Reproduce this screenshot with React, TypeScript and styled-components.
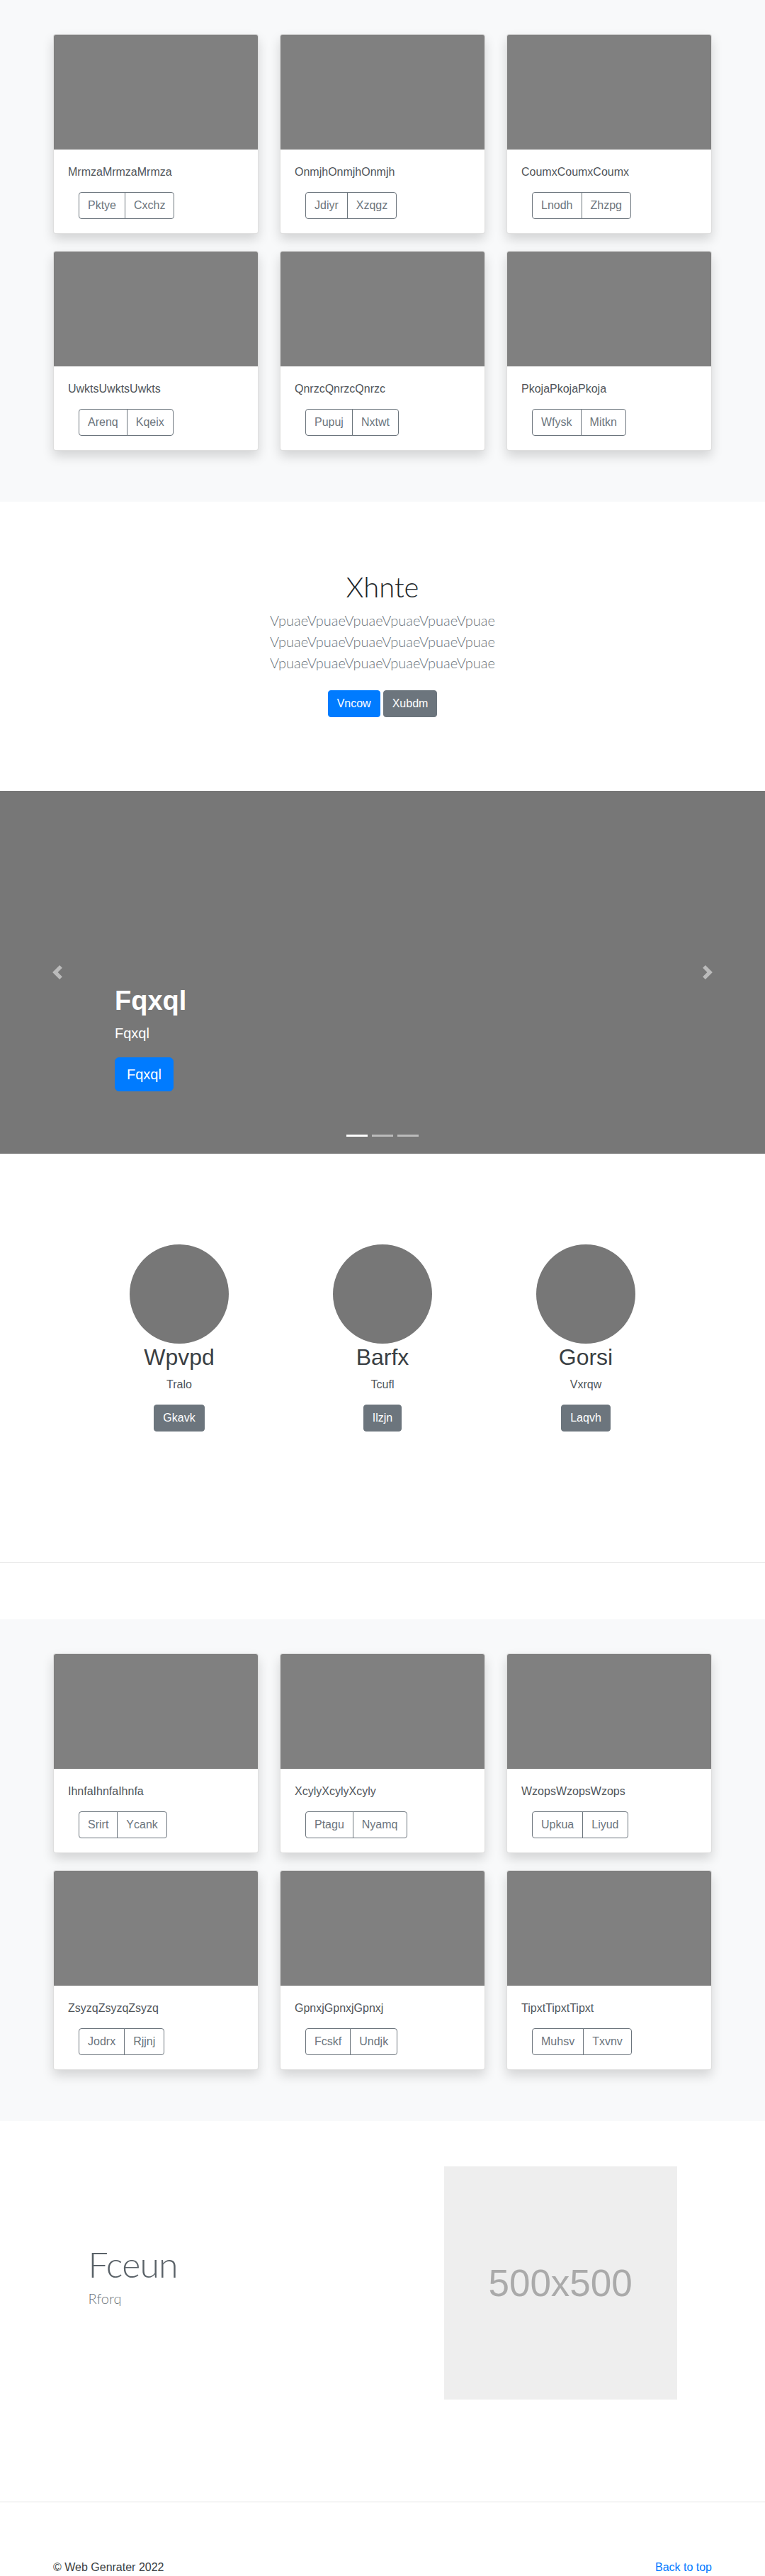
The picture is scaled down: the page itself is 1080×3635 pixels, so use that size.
import React from "react";
import styled, { createGlobalStyle } from "styled-components";

const GlobalStyle = createGlobalStyle`
  * {
    box-sizing: border-box;
  }
  body {
    margin: 0;
    font-family: "Liberation Sans", Arial, sans-serif;
    font-size: 16px;
    line-height: 1.5;
    color: #212529;
    background: #fff;
  }
`;

const lightFont = `"Lato", "Liberation Sans", Arial, sans-serif`;

// album

const AlbumSection = styled.section`
    background: #f8f9fa;
    padding: 48px 0 72px;
`;

const Container = styled.div`
    width: 960px;
    margin: 0 auto;
    padding: 0 15px;
`;

const CardGrid = styled.div`
    display: grid;
    grid-template-columns: repeat(3, 1fr);
    gap: 24px 30px;
`;

const Card = styled.div`
    background: #fff;
    border: 1px solid rgba(0, 0, 0, 0.125);
    border-radius: 4px;
    box-shadow: 0 8px 16px rgba(0, 0, 0, 0.15);
    overflow: hidden;
`;

const CardImage = styled.div`
    height: 162px;
    background: #808080;
`;

const CardBody = styled.div`
    padding: 20px;
`;

const CardText = styled.p`
    margin: 0 0 16px;
    color: #50555a;
`;

const ButtonGroup = styled.div`
    display: inline-flex;
    margin-left: 15px;
`;

const OutlineButton = styled.button`
    font-family: inherit;
    font-size: 16px;
    line-height: 24px;
    padding: 6px 12px;
    color: #6c757d;
    background: transparent;
    border: 1px solid #6c757d;
    &:first-child {
        border-radius: 4px 0 0 4px;
    }
    &:last-child {
        border-radius: 0 4px 4px 0;
        margin-left: -1px;
    }
`;

// hero

const Hero = styled.section`
    padding: 96px 0;
    text-align: center;
`;

const HeroTitle = styled.h1`
    font-family: ${lightFont};
    font-weight: 300;
    font-size: 40px;
    line-height: 1.2;
    margin: 0 0 8px;
    color: #212529;
`;

const Lead = styled.p`
    font-family: ${lightFont};
    font-weight: 300;
    font-size: 20px;
    line-height: 30px;
    color: #6c757d;
    margin: 0 0 16px;
`;

const ButtonRow = styled.p`
    margin: 0;
`;

const SolidButton = styled.button<{ $variant: "primary" | "secondary" }>`
    font-family: inherit;
    font-size: 16px;
    line-height: 24px;
    padding: 6px 12px;
    margin: 8px 2px;
    color: #fff;
    border-radius: 4px;
    background: ${({ $variant }) => ($variant === "primary" ? "#007bff" : "#6c757d")};
    border: 1px solid ${({ $variant }) => ($variant === "primary" ? "#007bff" : "#6c757d")};
`;

// carousel

const Carousel = styled.div`
    position: relative;
    height: 512px;
    background: #777;
    overflow: hidden;
`;

const Caption = styled.div`
    position: absolute;
    left: 15%;
    right: 15%;
    bottom: 48px;
    padding: 20px 0;
    color: #fff;
    text-align: left;
`;

const CaptionTitle = styled.h1`
    font-size: 38px;
    font-weight: 700;
    line-height: 48px;
    margin: 0 0 8px;
`;

const CaptionText = styled.p`
    font-size: 20px;
    line-height: 28px;
    margin: 0 0 20px;
`;

const CaptionAction = styled.p`
    margin: 0 0 20px;
    line-height: 0;
`;

const LargeButton = styled.button`
    font-family: inherit;
    font-size: 20px;
    line-height: 30px;
    padding: 8px 16px;
    color: #fff;
    background: #007bff;
    border: 1px solid #007bff;
    border-radius: 6px;
`;

const Control = styled.button<{ $side: "left" | "right" }>`
    position: absolute;
    top: 0;
    bottom: 0;
    ${({ $side }) => $side}: 0;
    width: 15%;
    display: flex;
    align-items: center;
    justify-content: center;
    background: none;
    border: 0;
    padding: 0;
    opacity: 0.5;
`;

const Indicators = styled.ol`
    position: absolute;
    left: 15%;
    right: 15%;
    bottom: 0;
    margin: 0 0 14px;
    padding: 0;
    list-style: none;
    display: flex;
    justify-content: center;
`;

const Indicator = styled.li<{ $active?: boolean }>`
    box-sizing: content-box;
    width: 30px;
    height: 3px;
    margin: 0 3px;
    border-top: 10px solid transparent;
    border-bottom: 10px solid transparent;
    background: #fff;
    background-clip: padding-box;
    opacity: ${({ $active }) => ($active ? 1 : 0.5)};
`;

// marketing

const Marketing = styled.section`
    padding: 128px 0 64px;
`;

const MarketingGrid = styled.div`
    width: 861px;
    margin: 0 auto;
    display: grid;
    grid-template-columns: repeat(3, 1fr);
    text-align: center;
`;

const Person = styled.div`
    padding: 0 15px;
    margin-bottom: 24px;
`;

const Avatar = styled.div`
    width: 140px;
    height: 140px;
    border-radius: 50%;
    background: #777;
    margin: 0 auto;
`;

const PersonName = styled.h2`
    font-size: 32px;
    font-weight: 400;
    line-height: 1.2;
    margin: 0 0 8px;
    color: #3a3f44;
`;

const PersonRole = styled.p`
    margin: 0 12px 16px;
    color: #50555a;
`;

const PersonAction = styled.p`
    margin: 0 0 16px;
    line-height: 0;
    & > button {
        margin: 0;
    }
`;

const Divider = styled.hr`
    margin: 80px 0;
    border: 0;
    border-top: 1px solid rgba(0, 0, 0, 0.1);
`;

// featurette

const Featurette = styled.section`
    padding: 64px 0;
`;

const FeatureRow = styled.div`
    width: 861px;
    margin: 0 auto;
    display: grid;
    grid-template-columns: 7fr 5fr;
    align-items: center;
`;

const FeatureText = styled.div`
    padding: 0 15px;
`;

const FeatureHeading = styled.h2`
    font-family: ${lightFont};
    font-weight: 300;
    font-size: 50px;
    line-height: 1;
    letter-spacing: -0.8px;
    margin: 0 0 8px;
    color: #5a6268;
`;

const FeatureLead = styled.p`
    font-family: ${lightFont};
    font-weight: 300;
    font-size: 20px;
    line-height: 30px;
    margin: 0 0 16px;
    color: #6c757d;
`;

const Placeholder = styled.div`
    margin: 0 15px;
    aspect-ratio: 1;
    background: #eee;
    color: #aaa;
    font-size: 53px;
    display: flex;
    align-items: center;
    justify-content: center;
`;

// footer

const Footer = styled.footer`
    width: 960px;
    margin: 0 auto;
    padding: 0 15px;
    display: flex;
    justify-content: space-between;
`;

const FooterText = styled.p`
    margin: 0 0 16px;
    color: #3a3f44;
`;

const BackLink = styled.a`
    color: #007bff;
    text-decoration: none;
`;

type TAlbumItem = { title: string; actions: [string, string] };

const firstAlbum: TAlbumItem[] = [
    { title: "MrmzaMrmzaMrmza", actions: ["Pktye", "Cxchz"] },
    { title: "OnmjhOnmjhOnmjh", actions: ["Jdiyr", "Xzqgz"] },
    { title: "CoumxCoumxCoumx", actions: ["Lnodh", "Zhzpg"] },
    { title: "UwktsUwktsUwkts", actions: ["Arenq", "Kqeix"] },
    { title: "QnrzcQnrzcQnrzc", actions: ["Pupuj", "Nxtwt"] },
    { title: "PkojaPkojaPkoja", actions: ["Wfysk", "Mitkn"] },
];

const secondAlbum: TAlbumItem[] = [
    { title: "IhnfaIhnfaIhnfa", actions: ["Srirt", "Ycank"] },
    { title: "XcylyXcylyXcyly", actions: ["Ptagu", "Nyamq"] },
    { title: "WzopsWzopsWzops", actions: ["Upkua", "Liyud"] },
    { title: "ZsyzqZsyzqZsyzq", actions: ["Jodrx", "Rjjnj"] },
    { title: "GpnxjGpnxjGpnxj", actions: ["Fcskf", "Undjk"] },
    { title: "TipxtTipxtTipxt", actions: ["Muhsv", "Txvnv"] },
];

const people = [
    { name: "Wpvpd", role: "Tralo", action: "Gkavk" },
    { name: "Barfx", role: "Tcufl", action: "Ilzjn" },
    { name: "Gorsi", role: "Vxrqw", action: "Laqvh" },
];

const Album = ({ items }: { items: TAlbumItem[] }) => (
    <AlbumSection>
        <Container>
            <CardGrid>
                {items.map((item) => (
                    <Card key={item.title}>
                        <CardImage />
                        <CardBody>
                            <CardText>{item.title}</CardText>
                            <ButtonGroup>
                                <OutlineButton>{item.actions[0]}</OutlineButton>
                                <OutlineButton>{item.actions[1]}</OutlineButton>
                            </ButtonGroup>
                        </CardBody>
                    </Card>
                ))}
            </CardGrid>
        </Container>
    </AlbumSection>
);

const Chevron = ({ dir }: { dir: "prev" | "next" }) => (
    <svg width="20" height="20" viewBox="0 0 8 8" fill="#fff">
        {dir === "prev" ? (
            <path d="M5.25 0l-4 4 4 4 1.5-1.5L4.25 4l2.5-2.5L5.25 0z" />
        ) : (
            <path d="M2.75 0l-1.5 1.5L3.75 4l-2.5 2.5L2.75 8l4-4-4-4z" />
        )}
    </svg>
);

export default function App() {
    return (
        <>
            <GlobalStyle />
            <Album items={firstAlbum} />

            <Hero>
                <HeroTitle>Xhnte</HeroTitle>
                <Lead>
                    VpuaeVpuaeVpuaeVpuaeVpuaeVpuae
                    <br />
                    VpuaeVpuaeVpuaeVpuaeVpuaeVpuae
                    <br />
                    VpuaeVpuaeVpuaeVpuaeVpuaeVpuae
                </Lead>
                <ButtonRow>
                    <SolidButton $variant="primary">Vncow</SolidButton>
                    <SolidButton $variant="secondary">Xubdm</SolidButton>
                </ButtonRow>
            </Hero>

            <Carousel>
                <Caption>
                    <CaptionTitle>Fqxql</CaptionTitle>
                    <CaptionText>Fqxql</CaptionText>
                    <CaptionAction>
                        <LargeButton>Fqxql</LargeButton>
                    </CaptionAction>
                </Caption>
                <Control $side="left" aria-label="Previous">
                    <Chevron dir="prev" />
                </Control>
                <Control $side="right" aria-label="Next">
                    <Chevron dir="next" />
                </Control>
                <Indicators>
                    <Indicator $active />
                    <Indicator />
                    <Indicator />
                </Indicators>
            </Carousel>

            <Marketing>
                <MarketingGrid>
                    {people.map((p) => (
                        <Person key={p.name}>
                            <Avatar />
                            <PersonName>{p.name}</PersonName>
                            <PersonRole>{p.role}</PersonRole>
                            <PersonAction>
                                <SolidButton $variant="secondary">{p.action}</SolidButton>
                            </PersonAction>
                        </Person>
                    ))}
                </MarketingGrid>
            </Marketing>

            <Divider />

            <Album items={secondAlbum} />

            <Featurette>
                <FeatureRow>
                    <FeatureText>
                        <FeatureHeading>Fceun</FeatureHeading>
                        <FeatureLead>Rforq</FeatureLead>
                    </FeatureText>
                    <Placeholder>500x500</Placeholder>
                </FeatureRow>
            </Featurette>

            <Divider />

            <Footer>
                <FooterText>© Web Genrater 2022</FooterText>
                <FooterText>
                    <BackLink href="#">Back to top</BackLink>
                </FooterText>
            </Footer>
        </>
    );
}
